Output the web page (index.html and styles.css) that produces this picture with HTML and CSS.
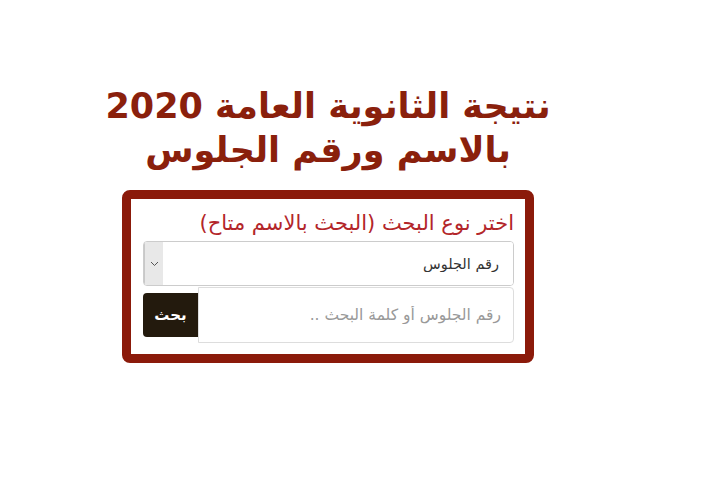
FILE: index.html
```html
<!DOCTYPE html>
<html lang="ar" dir="rtl">
<head>
  <meta charset="UTF-8">
  <meta name="viewport" content="width=device-width, initial-scale=1.0">
  <title>نتيجة الثانوية العامة 2020</title>
  <link rel="stylesheet" href="styles.css">
</head>
<body>
  <div class="page">
    <h1 class="title">نتيجة الثانوية العامة 2020<br>بالاسم ورقم الجلوس</h1>
    <form class="search-box">
      <label class="search-label" for="searchType">اختر نوع البحث (البحث بالاسم متاح)</label>
      <div class="select-wrap">
        <select id="searchType" class="search-type">
          <option value="seat">رقم الجلوس</option>
          <option value="name">الاسم</option>
        </select>
        <span class="select-arrow">
          <svg width="9" height="6" viewBox="0 0 9 6"><path d="M1 1l3.5 3.5L8 1" fill="none" stroke="#555" stroke-width="1"/></svg>
        </span>
      </div>
      <div class="search-row">
        <input type="text" class="search-input" placeholder="رقم الجلوس أو كلمة البحث ..">
        <button type="submit" class="search-button">بحث</button>
      </div>
    </form>
  </div>
</body>
</html>
```

FILE: styles.css
```css
body {
  margin: 0;
  background: #fff;
  font-family: "DejaVu Sans", sans-serif;
}
.page {
  width: 412px;
  margin-left: 122px;
  margin-right: auto;
  padding-top: 84px;
  direction: rtl;
}
.title {
  margin: 0 -60px 18px;
  text-align: center;
  color: #8a200c;
  font-size: 35px;
  line-height: 44px;
  font-weight: bold;
}
.search-box {
  border: 9px solid #8b1a0a;
  border-radius: 8px;
  padding: 8px 11px 11px 12px;
  display: flex;
  flex-direction: column;
}
.search-label {
  color: #b3262a;
  font-size: 21px;
  line-height: 32px;
  margin-bottom: 2px;
}
.select-wrap {
  display: flex;
  height: 43px;
  border: 1px solid #ccc;
  border-radius: 4px;
  overflow: hidden;
  margin-bottom: 1px;
}
.search-type {
  flex: 1;
  appearance: none;
  -webkit-appearance: none;
  border: none;
  background: #fff;
  font-family: inherit;
  font-size: 14.5px;
  color: #333;
  padding: 0 14px;
  outline: none;
}
.select-arrow {
  width: 18px;
  background: #e8e8e8;
  border-left: 1px solid #c8c8c8;
  display: flex;
  align-items: center;
  justify-content: center;
}
.search-row {
  display: flex;
  align-items: center;
}
.search-input {
  flex: 1;
  height: 56px;
  box-sizing: border-box;
  border: 1px solid #ddd;
  border-radius: 0 4px 4px 0;
  font-family: inherit;
  font-size: 15.5px;
  padding: 0 12px;
  color: #333;
}
.search-input::placeholder {
  color: #999;
}
.search-button {
  width: 55px;
  height: 44px;
  background: #231a0d;
  color: #fff;
  border: none;
  border-radius: 4px 0 0 4px;
  font-family: inherit;
  font-size: 15px;
  font-weight: bold;
}
```
